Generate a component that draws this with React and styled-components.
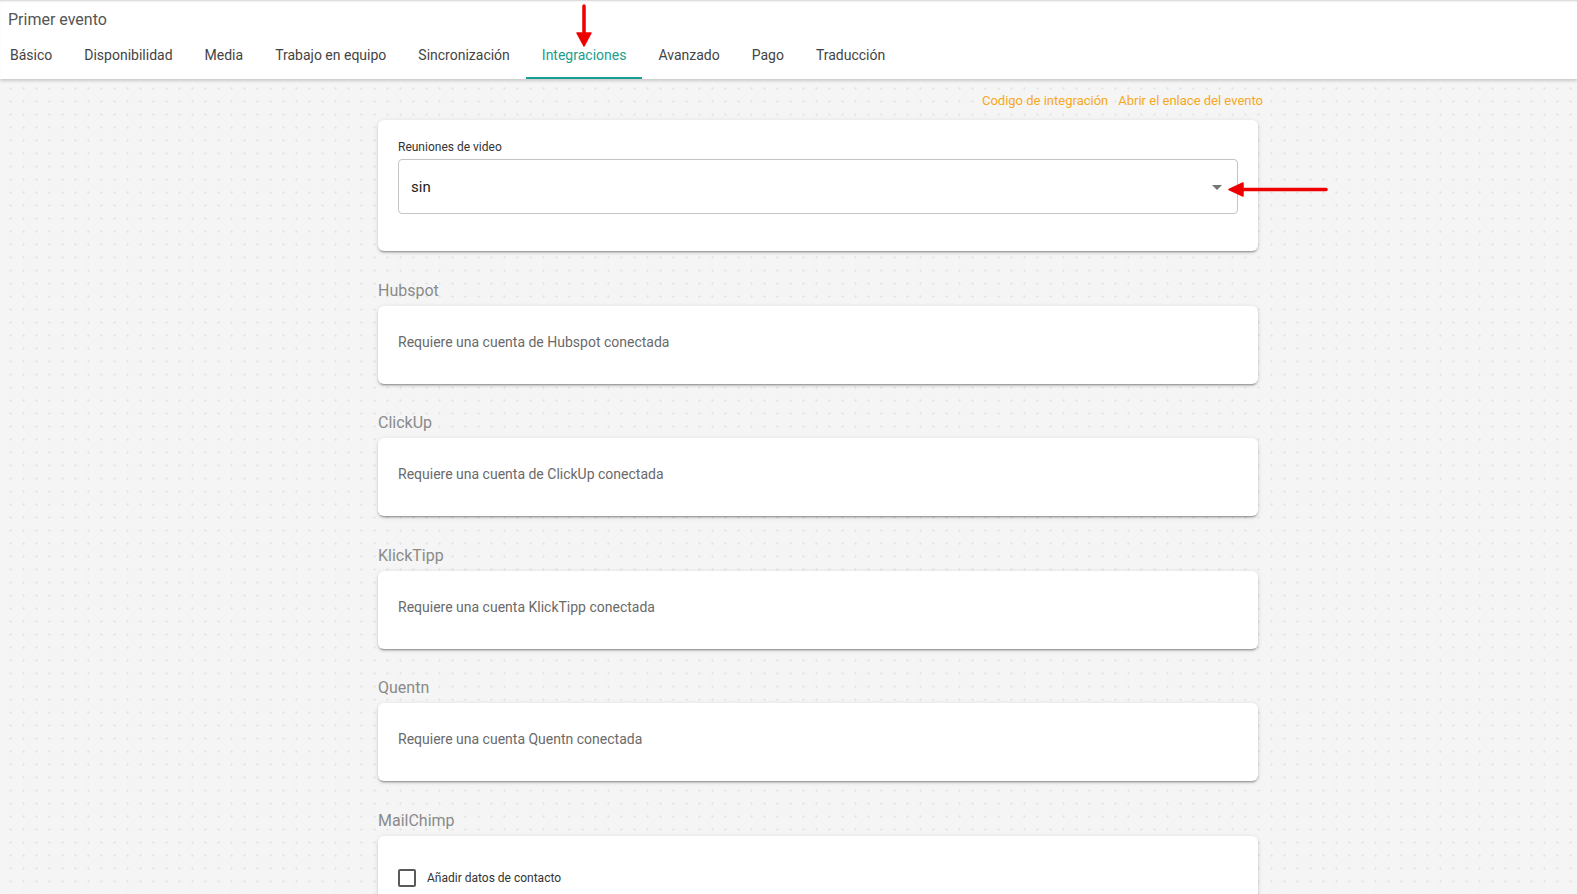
import React from "react";
import styled, { createGlobalStyle } from "styled-components";

const GlobalStyle = createGlobalStyle`
  html, body {
    margin: 0;
    padding: 0;
  }
  body {
    font-family: Roboto, "Liberation Sans", Arial, sans-serif;
    background-color: #f5f5f5;
    background-image: radial-gradient(circle, #e7e7e7 1px, transparent 1.2px);
    background-size: 13px 13px;
    background-position: 4px 4px;
    color: #333;
  }
`;

const Page = styled.div`
  position: relative;
  min-height: 894px;
  overflow: hidden;
`;

const Header = styled.header`
  background: #fff;
  box-shadow: inset 0 2px 2px -1px rgba(0, 0, 0, 0.18),
    0 2px 3px rgba(0, 0, 0, 0.18);
  position: relative;
  z-index: 1;
`;

const Title = styled.div`
  padding: 10px 8px 1px;
  font-size: 16px;
  line-height: 20px;
  color: #555;
`;

const TabList = styled.nav`
  display: flex;
  margin-left: -6px;
  height: 48px;
`;

const Tab = styled.div`
  display: flex;
  align-items: center;
  padding: 0 16px;
  font-size: 14px;
  color: ${p => (p.$active ? "#1a9e8f" : "#444")};
  border-bottom: 2px solid ${p => (p.$active ? "#17a092" : "transparent")};
  box-sizing: border-box;
  padding-top: 2px;
  white-space: nowrap;
`;

const Content = styled.main`
  width: 880px;
  margin-left: 378px;
  padding-bottom: 40px;
`;

const LinkRow = styled.div`
  display: flex;
  justify-content: flex-end;
  gap: 10px;
  margin: 13px -5px 11px 0;
  font-size: 13px;
  line-height: 17px;
`;

const OrangeLink = styled.a`
  color: #f7a823;
  text-decoration: none;
  cursor: pointer;
`;

const Card = styled.section`
  background: #fff;
  border-radius: 6px;
  box-shadow: 0 3px 1px -2px rgba(0, 0, 0, 0.2), 0 2px 2px 0 rgba(0, 0, 0, 0.14),
    0 1px 5px 0 rgba(0, 0, 0, 0.12);
  padding: ${p => p.$pad || "26px 20px 32px"};
`;

const FieldLabel = styled.label`
  display: block;
  font-size: 12px;
  line-height: 14px;
  color: #333;
  margin-bottom: 5px;
`;

const SelectBox = styled.div`
  height: 55px;
  box-sizing: border-box;
  border: 1px solid #c4c4c4;
  border-radius: 4px;
  display: flex;
  align-items: center;
  justify-content: space-between;
  padding: 0 15px 0 12px;
  font-size: 15px;
  color: #222;
`;

const Caret = styled.span`
  width: 0;
  height: 0;
  border-left: 5px solid transparent;
  border-right: 5px solid transparent;
  border-top: 5px solid #757575;
  margin-top: 1px;
`;

const SectionTitle = styled.h3`
  margin: 29.5px 0 6px;
  font-size: 16px;
  line-height: 19px;
  font-weight: 400;
  color: #8a8a8a;
`;

const Hint = styled.p`
  margin: 0;
  font-size: 14px;
  line-height: 20px;
  color: #6a6a6a;
`;

const CheckRow = styled.label`
  display: flex;
  align-items: center;
  gap: 11px;
  font-size: 12px;
  color: #333;
`;

const Checkbox = styled.span`
  width: 18px;
  height: 18px;
  box-sizing: border-box;
  border: 2px solid #5a5a5a;
  border-radius: 2px;
`;

const Annotation = styled.svg`
  position: absolute;
  left: 0;
  top: 0;
  pointer-events: none;
  z-index: 5;
`;

const tabs = [
  "Básico",
  "Disponibilidad",
  "Media",
  "Trabajo en equipo",
  "Sincronización",
  "Integraciones",
  "Avanzado",
  "Pago",
  "Traducción",
];

const integrations = [
  { name: "Hubspot", hint: "Requiere una cuenta de Hubspot conectada" },
  { name: "ClickUp", hint: "Requiere una cuenta de ClickUp conectada" },
  { name: "KlickTipp", hint: "Requiere una cuenta KlickTipp conectada" },
  { name: "Quentn", hint: "Requiere una cuenta Quentn conectada" },
];

export default function App() {
  return (
    <Page>
      <GlobalStyle />
      <Header>
        <Title>Primer evento</Title>
        <TabList>
          {tabs.map(t => (
            <Tab key={t} $active={t === "Integraciones"}>
              {t}
            </Tab>
          ))}
        </TabList>
      </Header>

      <Content>
        <LinkRow>
          <OrangeLink>Codigo de integración</OrangeLink>
          <OrangeLink>Abrir el enlace del evento</OrangeLink>
        </LinkRow>

        <Card $pad="20px 20px 37px">
          <FieldLabel>Reuniones de video</FieldLabel>
          <SelectBox>
            <span>sin</span>
            <Caret />
          </SelectBox>
        </Card>

        {integrations.map(i => (
          <React.Fragment key={i.name}>
            <SectionTitle>{i.name}</SectionTitle>
            <Card>
              <Hint>{i.hint}</Hint>
            </Card>
          </React.Fragment>
        ))}

        <SectionTitle>MailChimp</SectionTitle>
        <Card $pad="33px 20px 32px">
          <CheckRow>
            <Checkbox />
            Añadir datos de contacto
          </CheckRow>
        </Card>
      </Content>

      <Annotation width="1577" height="894">
        <g stroke="#ee0000" strokeWidth="3.5" strokeLinecap="round" fill="#ee0000">
          <line x1="584" y1="6" x2="584" y2="36" />
          <polygon points="577,33 591,33 584,46" strokeLinejoin="round" strokeWidth="1.5" />
          <line x1="1326" y1="189.5" x2="1240" y2="189.5" />
          <polygon points="1243,183 1243,196 1229,189.5" strokeLinejoin="round" strokeWidth="1.5" />
        </g>
      </Annotation>
    </Page>
  );
}
